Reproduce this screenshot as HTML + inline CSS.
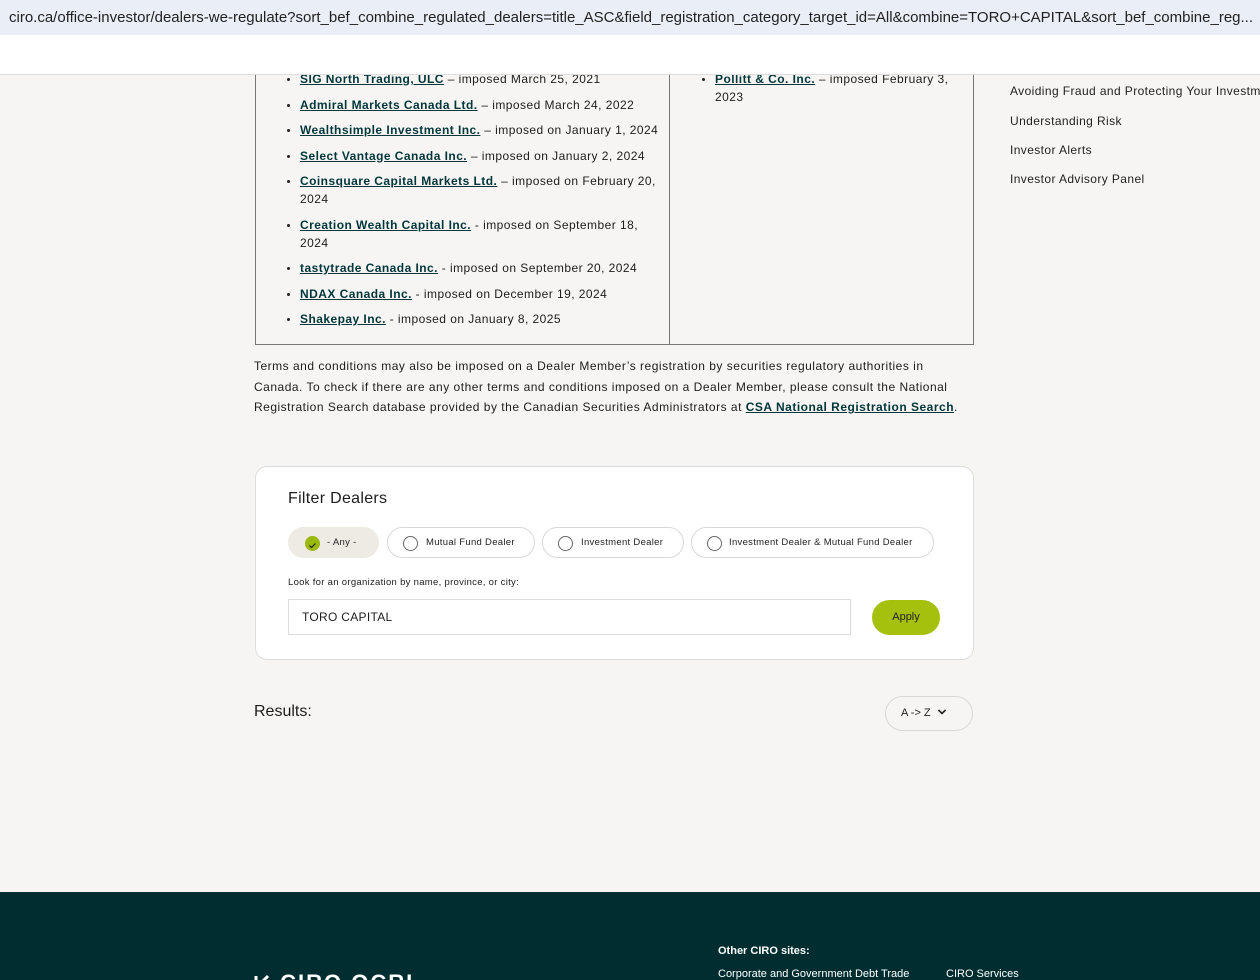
<!DOCTYPE html>
<html><head><meta charset="utf-8">
<style>
*{box-sizing:border-box;margin:0;padding:0}
html{overflow:hidden;height:980px}
body{width:1260px;height:980px;overflow:hidden;background:#f6f5f3;font-family:"Liberation Sans",sans-serif;color:#1d1d1d;position:relative}
.url{position:absolute;left:0;top:0;width:1260px;height:35px;background:#e9eef7;font-size:15px;color:#222;line-height:35px;padding-left:9px;white-space:nowrap;overflow:hidden}
.wbar{position:absolute;left:0;top:35px;width:1260px;height:40px;background:#fff;border-bottom:1px solid #ddd;z-index:2}
a{color:#00363a;font-weight:bold;text-decoration:underline}
.box{position:absolute;left:255px;top:40px;width:719px;height:305px;border:1px solid #777;border-top:none}
.div{position:absolute;left:669px;top:40px;width:1px;height:304px;background:#777}
ul{list-style:none;position:absolute;font-size:12px;line-height:18px;letter-spacing:0.45px}
li{position:relative;margin-bottom:7.5px}
li:before{content:"";position:absolute;left:-13px;top:8px;width:3px;height:3px;border-radius:50%;background:#222}
.side{position:absolute;left:1010px;font-size:12px;color:#222;white-space:nowrap;letter-spacing:0.4px}
.terms{position:absolute;left:254px;top:356px;width:740px;font-size:12px;line-height:20.5px;letter-spacing:0.5px;white-space:nowrap}
.filter{position:absolute;left:255px;top:466px;width:719px;height:194px;background:#fff;border:1px solid #ddd;border-radius:12px}
.pill{position:absolute;top:60px;height:31px;border:1px solid #d8d8d8;border-radius:16px;font-size:9.5px;line-height:29px;background:#fff;color:#222;letter-spacing:0.3px;white-space:nowrap}
.pill .r{position:absolute;left:15px;top:8px;width:15px;height:15px;border:1px solid #666;border-radius:50%}
.any{background:#eeebe5;border-color:#eeebe5}
.any .r{background:#9bb80d;border:none;left:16px}
.inp{position:absolute;left:32px;top:132px;width:563px;height:36px;border:1px solid #ddd;font-size:12px;line-height:34px;padding-left:13px;letter-spacing:0.3px}
.btn{position:absolute;left:616px;top:133px;width:68px;height:35px;border-radius:18px;background:#a6c00e;font-size:11px;text-align:center;line-height:35px}
.foot{position:absolute;left:0;top:892px;width:1260px;height:88px;background:#002e30;color:#fff;overflow:hidden}
</style></head><body>
<div class="url">ciro.ca/office-investor/dealers-we-regulate?sort_bef_combine_regulated_dealers=title_ASC&amp;field_registration_category_target_id=All&amp;combine=TORO+CAPITAL&amp;sort_bef_combine_reg...</div>
<div class="wbar"></div>
<div class="box"></div><div class="div"></div>
<ul style="left:300px;top:70px;width:362px">
<li><a>SIG North Trading, ULC</a> – imposed March 25, 2021</li>
<li><a>Admiral Markets Canada Ltd.</a> – imposed March 24, 2022</li>
<li><a>Wealthsimple Investment Inc.</a> – imposed on January 1, 2024</li>
<li><a>Select Vantage Canada Inc.</a> – imposed on January 2, 2024</li>
<li><a>Coinsquare Capital Markets Ltd.</a> – imposed on February 20, 2024</li>
<li><a>Creation Wealth Capital Inc.</a> - imposed on September 18,<br>2024</li>
<li><a>tastytrade Canada Inc.</a> - imposed on September 20, 2024</li>
<li><a>NDAX Canada Inc.</a> - imposed on December 19, 2024</li>
<li><a>Shakepay Inc.</a> - imposed on January 8, 2025</li>
</ul>
<ul style="left:715px;top:70px;width:240px">
<li><a>Pollitt &amp; Co. Inc.</a> – imposed February 3, 2023</li>
</ul>
<div class="side" style="top:84px">Avoiding Fraud and Protecting Your Investments</div>
<div class="side" style="top:114px">Understanding Risk</div>
<div class="side" style="top:143px">Investor Alerts</div>
<div class="side" style="top:172px">Investor Advisory Panel</div>
<div class="terms">Terms and conditions may also be imposed on a Dealer Member’s registration by securities regulatory authorities in<br>Canada. To check if there are any other terms and conditions imposed on a Dealer Member, please consult the National<br>Registration Search database provided by the Canadian Securities Administrators at <a>CSA National Registration Search</a>.</div>
<div class="filter">
<div style="position:absolute;left:32px;top:23px;font-size:16px;letter-spacing:0.3px">Filter Dealers</div>
<div class="pill any" style="left:32px;width:91px"><span class="r"><svg width="15" height="15" viewBox="0 0 15 15"><path d="M4.5 7.5l2 2 4-4" stroke="#222" stroke-width="1.2" fill="none"/></svg></span><span style="margin-left:38px">- Any -</span></div>
<div class="pill" style="left:131px;width:148px"><span class="r"></span><span style="margin-left:38px">Mutual Fund Dealer</span></div>
<div class="pill" style="left:286px;width:142px"><span class="r"></span><span style="margin-left:38px">Investment Dealer</span></div>
<div class="pill" style="left:435px;width:243px"><span class="r"></span><span style="margin-left:37px">Investment Dealer &amp; Mutual Fund Dealer</span></div>
<div style="position:absolute;left:32px;top:110px;font-size:9.5px;letter-spacing:0.3px">Look for an organization by name, province, or city:</div>
<div class="inp">TORO CAPITAL</div>
<div class="btn">Apply</div>
</div>
<div style="position:absolute;left:254px;top:703px;font-size:16px">Results:</div>
<div style="position:absolute;left:885px;top:696px;width:88px;height:35px;border:1px solid #d8d8d8;border-radius:18px;font-size:11px;line-height:33px;padding-left:15px">A -&gt; Z <svg width="10" height="8" viewBox="0 0 10 8" style="margin-left:3px"><path d="M1.5 2l3.5 3.5 3.5-3.5" stroke="#222" stroke-width="1.6" fill="none"/></svg></div>
<div class="foot">
<div style="position:absolute;left:718px;top:53px;font-size:11px;font-weight:bold">Other CIRO sites:</div>
<div style="position:absolute;left:718px;top:76px;font-size:11px;white-space:nowrap">Corporate and Government Debt Trade</div>
<div style="position:absolute;left:946px;top:76px;font-size:11px">CIRO Services</div>
<div style="position:absolute;left:254px;top:80px;font-size:22px;font-weight:bold;letter-spacing:2px;white-space:nowrap;line-height:22px"><svg width="18" height="16" viewBox="0 0 18 16"><path d="M2 14V2M2 14L14 2" stroke="#fff" stroke-width="3" fill="none"/></svg> CIRO OCRI</div>
</div>
</body></html>
